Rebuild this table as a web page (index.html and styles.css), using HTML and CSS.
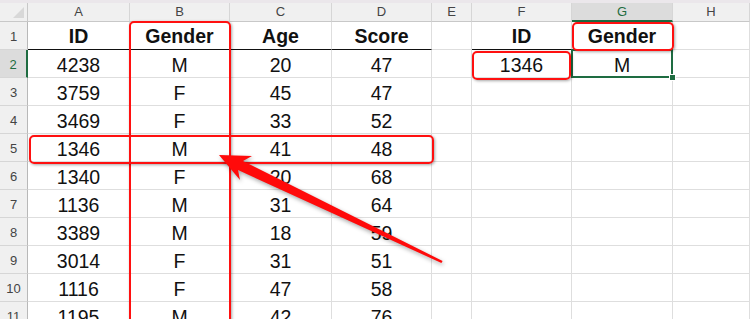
FILE: index.html
```html
<!DOCTYPE html>
<html>
<head>
<meta charset="utf-8">
<link rel="stylesheet" href="styles.css">
</head>
<body>
<div class="sheet">
  <div class="topstrip"></div>
  <div class="grid">
    <div class="corner"></div>
    <div class="ch">A</div><div class="ch">B</div><div class="ch">C</div><div class="ch">D</div><div class="ch">E</div><div class="ch">F</div><div class="ch ch-sel">G</div><div class="ch">H</div>

    <div class="rh">1</div>
    <div class="c b hd">ID</div><div class="c b hd">Gender</div><div class="c b hd">Age</div><div class="c b hd">Score</div><div class="c"></div><div class="c b hd">ID</div><div class="c b hd">Gender</div><div class="c"></div>

    <div class="rh rh-sel">2</div>
    <div class="c">4238</div><div class="c">M</div><div class="c">20</div><div class="c">47</div><div class="c"></div><div class="c">1346</div><div class="c sel">M<span class="handle"></span></div><div class="c"></div>

    <div class="rh">3</div>
    <div class="c">3759</div><div class="c">F</div><div class="c">45</div><div class="c">47</div><div class="c"></div><div class="c"></div><div class="c"></div><div class="c"></div>

    <div class="rh">4</div>
    <div class="c">3469</div><div class="c">F</div><div class="c">33</div><div class="c">52</div><div class="c"></div><div class="c"></div><div class="c"></div><div class="c"></div>

    <div class="rh">5</div>
    <div class="c">1346</div><div class="c">M</div><div class="c">41</div><div class="c">48</div><div class="c"></div><div class="c"></div><div class="c"></div><div class="c"></div>

    <div class="rh">6</div>
    <div class="c">1340</div><div class="c">F</div><div class="c">20</div><div class="c">68</div><div class="c"></div><div class="c"></div><div class="c"></div><div class="c"></div>

    <div class="rh">7</div>
    <div class="c">1136</div><div class="c">M</div><div class="c">31</div><div class="c">64</div><div class="c"></div><div class="c"></div><div class="c"></div><div class="c"></div>

    <div class="rh">8</div>
    <div class="c">3389</div><div class="c">M</div><div class="c">18</div><div class="c">59</div><div class="c"></div><div class="c"></div><div class="c"></div><div class="c"></div>

    <div class="rh">9</div>
    <div class="c">3014</div><div class="c">F</div><div class="c">31</div><div class="c">51</div><div class="c"></div><div class="c"></div><div class="c"></div><div class="c"></div>

    <div class="rh">10</div>
    <div class="c">1116</div><div class="c">F</div><div class="c">47</div><div class="c">58</div><div class="c"></div><div class="c"></div><div class="c"></div><div class="c"></div>

    <div class="rh">11</div>
    <div class="c">1195</div><div class="c">M</div><div class="c">42</div><div class="c">76</div><div class="c"></div><div class="c"></div><div class="c"></div><div class="c"></div>
  </div>

  <div class="mark mark-colb"></div>
  <div class="mark mark-row5"></div>
  <div class="mark mark-g1"></div>
  <div class="mark mark-f2"></div>

  <svg class="arrow" width="750" height="319" viewBox="0 0 750 319">
    <polygon points="219,155 252,156 243,161 442.6,261 441.4,263 238,170 240,180" fill="#ff0a0a"/>
  </svg>
</div>
</body>
</html>
```

FILE: styles.css
```css
* { box-sizing: border-box; }
html, body { margin: 0; padding: 0; background: #fff; }
body { font-family: "Liberation Sans", Arial, sans-serif; }

.sheet {
  position: relative;
  width: 750px;
  height: 319px;
  overflow: hidden;
}

.topstrip {
  height: 3px;
  background: #ebe7eb;
}

.grid {
  display: grid;
  grid-template-columns: 28px 102px 100px 102px 100px 40px 100px 101px 77px;
  grid-template-rows: 19px repeat(11, 28px);
}

.corner {
  position: relative;
  background: #f0f0f0;
  border-right: 1px solid #c8c8c8;
  border-bottom: 1px solid #c8c8c8;
}
.corner::after {
  content: "";
  position: absolute;
  right: 3px;
  bottom: 3px;
  width: 0;
  height: 0;
  border-left: 11px solid transparent;
  border-bottom: 11px solid #d8d8d8;
}

.ch {
  background: #f0f0f0;
  border-right: 1px solid #d6d6d6;
  border-bottom: 1px solid #c8c8c8;
  color: #444;
  font-size: 13px;
  line-height: 18px;
  text-align: center;
}
.ch-sel {
  background: #dcdcdc;
  color: #1e6c41;
  border-bottom: 2px solid #1e6c41;
}

.rh {
  background: #f0f0f0;
  border-right: 1px solid #b8b8b8;
  border-bottom: 1px solid #d6d6d6;
  color: #444;
  font-size: 13px;
  line-height: 27px;
  padding-top: 1px;
  text-align: center;
}
.rh-sel {
  background: #dcdcdc;
  color: #1e6c41;
  border-right: 2px solid #1e6c41;
}

.c {
  position: relative;
  border-right: 1px solid #dedede;
  border-bottom: 1px solid #dedede;
  font-size: 19.5px;
  color: #111;
  text-align: center;
  padding-top: 4px;
  line-height: 23px;
}
.c.b { font-weight: bold; padding-top: 3px; }
.c.hd { border-bottom: 1px solid #111; }

.sel {
  z-index: 1;
  border: 2px solid #1e6c41;
  margin: -1px 0 0 -1px;
  padding-top: 3px;
}
.handle {
  position: absolute;
  right: -5px;
  bottom: -5px;
  width: 7px;
  height: 7px;
  background: #1e6c41;
  border: 1px solid #fff;
}

.mark {
  position: absolute;
  z-index: 2;
  border: 2px solid #ff1010;
  border-radius: 5px;
  box-shadow: 1px 1px 3px rgba(0,0,0,0.35);
}
.mark-colb { left: 129px; top: 21px; width: 102px; height: 330px; }
.mark-row5 { left: 29px; top: 135px; width: 405px; height: 29px; }
.mark-g1 { left: 572px; top: 22px; width: 102px; height: 29px; }
.mark-f2 { left: 472px; top: 51px; width: 99px; height: 29px; }

.arrow {
  position: absolute;
  z-index: 3;
  left: 0;
  top: 0;
  pointer-events: none;
  filter: drop-shadow(1px 2px 2px rgba(0,0,0,0.35));
}
```
